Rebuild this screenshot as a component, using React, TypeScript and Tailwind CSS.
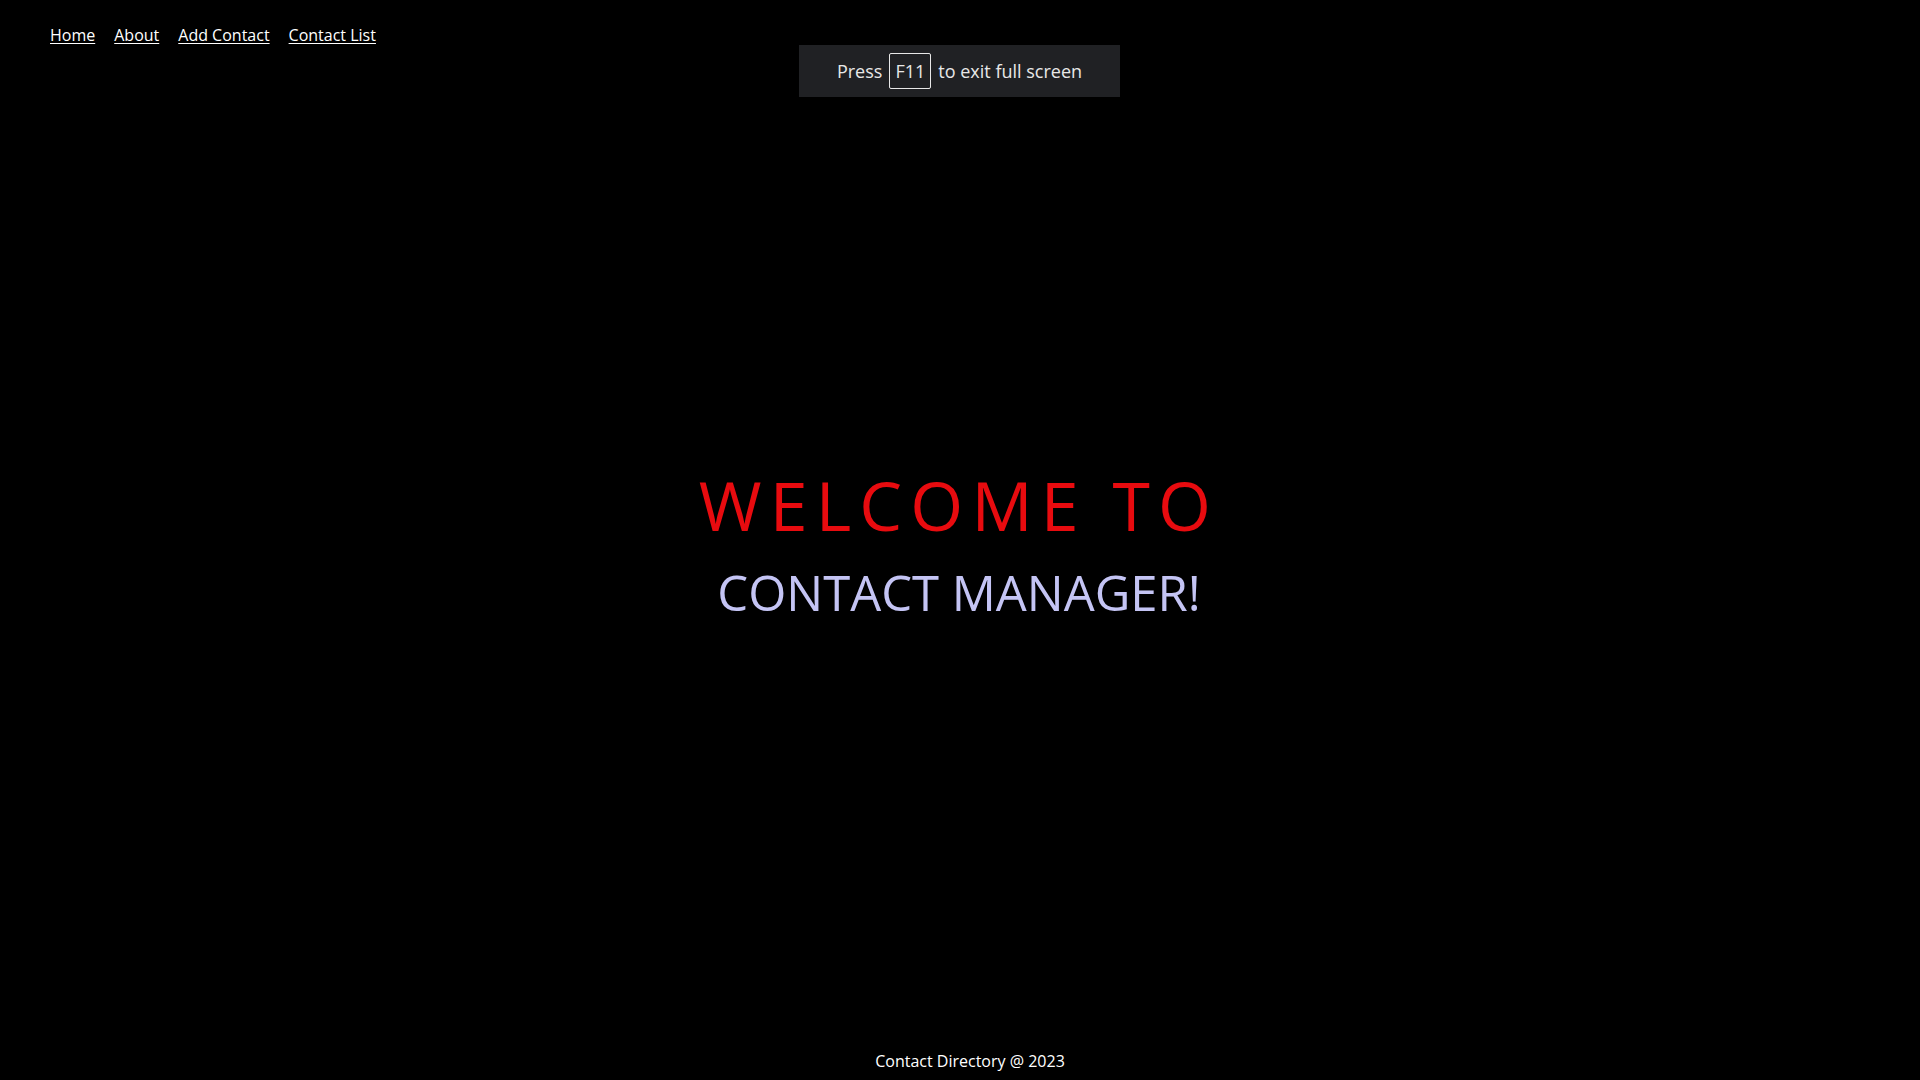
import React from 'react'

const NavLink = ({ label }: { label: string }) => (
  <a href="#" className="text-white underline underline-offset-2 text-[16px] leading-6">
    {label}
  </a>
)

export default function App() {
  return (
    <div
      className="relative w-full h-screen bg-black text-white flex flex-col overflow-hidden"
      style={{ fontFamily: '"Open Sans", "Noto Sans", sans-serif' }}
    >
      <nav className="flex items-center gap-[19px] pl-[50px] pt-[23px]">
        <NavLink label="Home" />
        <NavLink label="About" />
        <NavLink label="Add Contact" />
        <NavLink label="Contact List" />
      </nav>

      {/* browser fullscreen notice */}
      <div className="absolute top-[45px] left-[799px] w-[321px] h-[52px] bg-[#202124] flex items-center justify-center text-[18px] text-[#e8e8e8]">
        <span>Press</span>
        <span className="mx-[7px] w-[42px] h-[36px] border border-[#e8e8e8] rounded-[2px] flex items-center justify-center">
          F11
        </span>
        <span>to exit full screen</span>
      </div>

      <main className="flex-1 flex flex-col items-center pt-[424px] pr-[2px]">
        <h1 className="text-[68px] leading-none tracking-[0.12em] text-[#e80b0f] font-normal">
          WELCOME TO
        </h1>
        <h2 className="mt-[29px] text-[49px] leading-none text-[#c4c4f4] font-normal">
          CONTACT MANAGER!
        </h2>
      </main>

      <footer className="flex justify-center pl-[20px] pb-[7px] text-[16px] leading-6 text-white">
        Contact Directory @ 2023
      </footer>
    </div>
  )
}
